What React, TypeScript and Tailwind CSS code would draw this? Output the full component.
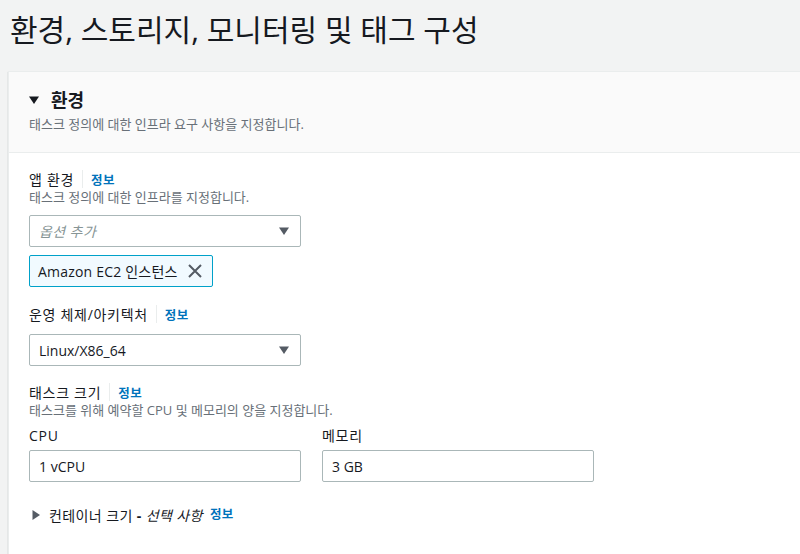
const font = { fontFamily: '"Open Sans", "Noto Sans CJK KR", sans-serif' };

function Caret({ dir = 'down', className = '' }: { dir?: 'down' | 'right'; className?: string }) {
  return (
    <svg width="10" height="10" viewBox="0 0 10 10" className={className}>
      {dir === 'down' ? <path d="M0 1.5h10L5 9z" fill="currentColor" /> : <path d="M1.5 0v10L9 5z" fill="currentColor" />}
    </svg>
  );
}

function Label({ text, info = true }: { text: string; info?: boolean }) {
  return (
    <div className="flex items-center h-5 text-[14px] tracking-[0.7px] text-[#16191f]">
      <span>{text}</span>
      {info && (
        <>
          <span className="mx-[8px] h-[18px] w-px bg-[#eaeded]" />
          <a className="text-[12.5px] tracking-[0.4px] leading-5 pt-[3px] font-bold text-[#0073bb]">정보</a>
        </>
      )}
    </div>
  );
}

function Select({ value, placeholder }: { value?: string; placeholder?: string }) {
  return (
    <div className="flex items-center justify-between w-[272px] h-[32px] border border-[#aab7b8] rounded-[2px] bg-white pl-[9px] pr-[11px] text-[14px]">
      {value ? (
        <span className="text-[#16191f]">{value}</span>
      ) : (
        <span className="italic tracking-[0.4px] text-[#879596]">{placeholder}</span>
      )}
      <Caret className="text-[#545b64]" />
    </div>
  );
}

function Input({ value }: { value: string }) {
  return (
    <div className="flex items-center w-[272px] h-[32px] border border-[#aab7b8] rounded-[2px] bg-white px-[9px] text-[14px] text-[#16191f]">
      {value}
    </div>
  );
}

export default function App() {
  return (
    <div className="w-[800px] h-[554px] overflow-hidden bg-[#f2f3f3]" style={font}>
      <div className="h-[71px] pt-[12px] pl-[10px]">
        <h1 className="text-[30px] leading-[36px] font-normal text-[#16191f]">환경, 스토리지, 모니터링 및 태그 구성</h1>
      </div>

      <div className="ml-[8px] bg-white border-l border-t border-[#eaeded] shadow-[0_1px_1px_0_rgba(0,28,36,0.3)] h-[500px]">
        <div className="bg-[#fafafa] border-b border-[#eaeded] px-[20px] pt-[16px] pb-[20px]">
          <div className="flex items-center gap-[12px] h-6">
            <Caret className="text-[#16191f]" />
            <h2 className="text-[18px] font-bold text-[#16191f]">환경</h2>
          </div>
          <p className="mt-[4px] text-[13px] leading-4 text-[#687078]">태스크 정의에 대한 인프라 요구 사항을 지정합니다.</p>
        </div>

        <div className="px-[20px] pt-[16px]">
          <Label text="앱 환경" />
          <p className="text-[13px] leading-4 text-[#687078]">태스크 정의에 대한 인프라를 지정합니다.</p>
          <div className="mt-[10px]">
            <Select placeholder="옵션 추가" />
          </div>
          <div className="mt-[8px] inline-flex items-center gap-[10px] h-[32px] border border-[#00a1c9] rounded-[2px] bg-[#f1faff] pl-[8px] pr-[10px] text-[14px] tracking-[0.2px] text-[#16191f]">
            <span>Amazon EC2 인스턴스</span>
            <svg width="14" height="14" viewBox="0 0 14 14" className="text-[#545b64]">
              <path d="M1 1l12 12M13 1L1 13" stroke="currentColor" strokeWidth="2" fill="none" />
            </svg>
          </div>

          <div className="mt-[17px]">
            <Label text="운영 체제/아키텍처" />
          </div>
          <div className="mt-[10px]">
            <Select value="Linux/X86_64" />
          </div>

          <div className="mt-[16px]">
            <Label text="태스크 크기" />
          </div>
          <p className="text-[13px] leading-4 text-[#687078]">태스크를 위해 예약할 CPU 및 메모리의 양을 지정합니다.</p>

          <div className="mt-[7px] flex gap-[21px]">
            <div>
              <Label text="CPU" info={false} />
              <div className="mt-[5px]">
                <Input value="1 vCPU" />
              </div>
            </div>
            <div>
              <Label text="메모리" info={false} />
              <div className="mt-[5px]">
                <Input value="3 GB" />
              </div>
            </div>
          </div>

          <div className="mt-[23px] flex items-center h-5 text-[14px] tracking-[0.4px] text-[#16191f]">
            <Caret dir="right" className="ml-[2px] mr-[8px] text-[#545b64]" />
            <span>컨테이너 크기 <b>-</b> <i>선택 사항</i></span>
            <a className="ml-[7px] text-[12.5px] tracking-[0.4px] font-bold text-[#0073bb]">정보</a>
          </div>
        </div>
      </div>
    </div>
  );
}
